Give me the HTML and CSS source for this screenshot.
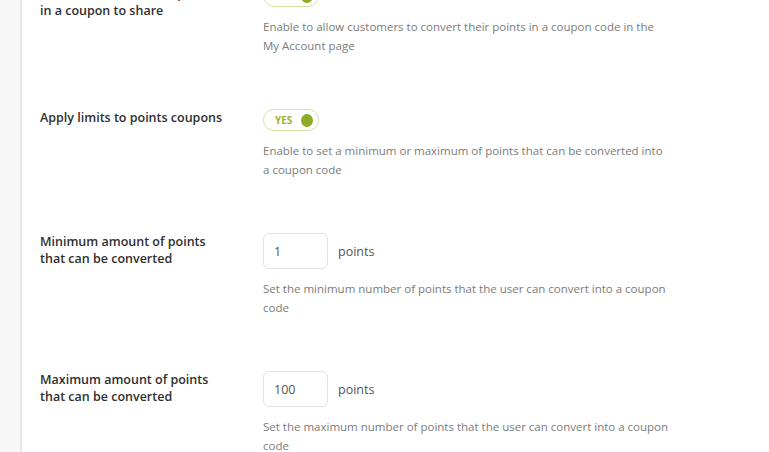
FILE: index.html
```html
<!DOCTYPE html>
<html lang="en">
  <head>
    <meta charset="UTF-8" />
    <meta name="viewport" content="width=device-width, initial-scale=1.0" />
    <title>Points coupons settings</title>
    <link rel="stylesheet" href="styles.css">
  </head>
  <body>
    <div class="panel">
      <div class="options">
        <div class="option">
          <div class="label">Allow users to convert points in a coupon to share</div>
          <div class="field">
            <span class="toggle">YES <span class="knob"></span></span>
            <p class="desc">Enable to allow customers to convert their points in a coupon code in the My Account page</p>
          </div>
        </div>

        <div class="option">
          <div class="label">Apply limits to points coupons</div>
          <div class="field">
            <span class="toggle">YES <span class="knob"></span></span>
            <p class="desc">Enable to set a minimum or maximum of points that can be converted into a coupon code</p>
          </div>
        </div>

        <div class="option">
          <div class="label">Minimum amount of points that can be converted</div>
          <div class="field">
            <div class="amount">
              <input type="text" class="number" value="1" />
              <span class="unit">points</span>
            </div>
            <p class="desc">Set the minimum number of points that the user can convert into a coupon code</p>
          </div>
        </div>

        <div class="option">
          <div class="label">Maximum amount of points that can be converted</div>
          <div class="field">
            <div class="amount">
              <input type="text" class="number" value="100" />
              <span class="unit">points</span>
            </div>
            <p class="desc">Set the maximum number of points that the user can convert into a coupon code</p>
          </div>
        </div>
      </div>
    </div>
  </body>
</html>
```

FILE: styles.css
```css
html,
body {
  height: 100%;
}
body {
  margin: 0;
  font-family: "Open Sans", "Noto Sans", sans-serif;
  background-color: #f7f7f7;
  color: #333;
  overflow: hidden;
}
.panel {
  margin-left: 20px;
  min-height: 100%;
  background-color: #fff;
  border-left: 2px solid #e6e6e6;
  padding-left: 18px;
}
.options {
  margin-top: -15px;
}
.option {
  display: grid;
  grid-template-columns: 223px 1fr;
  align-items: start;
  padding-bottom: 54px;
}
.label {
  width: 186px;
  font-size: 12.5px;
  font-weight: 600;
  line-height: 17px;
  color: #2f2f2f;
}
.field {
  display: flex;
  flex-direction: column;
  align-items: flex-start;
}
.toggle {
  display: inline-flex;
  align-items: center;
  gap: 9px;
  box-sizing: border-box;
  width: 56px;
  height: 22px;
  padding: 0 5px 0 11px;
  border: 1px solid #d4e2a6;
  border-radius: 11px;
  font-size: 10px;
  font-weight: 700;
  color: #98b43a;
}
.knob {
  width: 13px;
  height: 13px;
  border-radius: 50%;
  background-color: #8fac26;
}
.amount {
  display: flex;
  align-items: center;
  gap: 10px;
}
.number {
  box-sizing: border-box;
  width: 65px;
  height: 36px;
  padding: 0 10px;
  border: 1px solid #e3e3e3;
  border-radius: 6px;
  font-family: inherit;
  font-size: 12.5px;
  color: #555;
  outline: none;
}
.unit {
  font-size: 12.5px;
  color: #555;
}
.desc {
  margin: 10px 0 0;
  width: 406px;
  font-size: 11.5px;
  line-height: 19px;
  color: #7b7b7b;
}
```
